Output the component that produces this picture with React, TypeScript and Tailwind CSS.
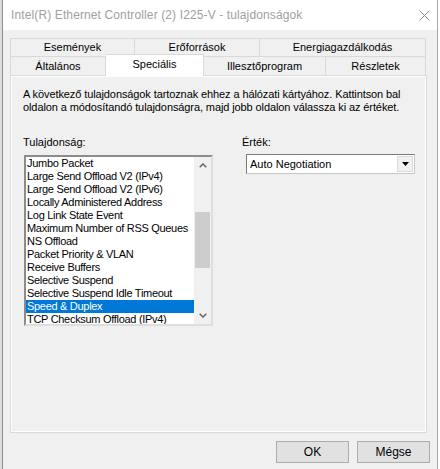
import React from "react";

const items = [
  "Jumbo Packet",
  "Large Send Offload V2 (IPv4)",
  "Large Send Offload V2 (IPv6)",
  "Locally Administered Address",
  "Log Link State Event",
  "Maximum Number of RSS Queues",
  "NS Offload",
  "Packet Priority & VLAN",
  "Receive Buffers",
  "Selective Suspend",
  "Selective Suspend Idle Timeout",
  "Speed & Duplex",
  "TCP Checksum Offload (IPv4)",
];

function Tab({ label, w, first, selected }: { label: string; w: string; first?: boolean; selected?: boolean }) {
  return (
    <div
      className={
        "flex items-center justify-center border-t border-r border-[#d9d9d9] " +
        w +
        (first ? " border-l" : "") +
        (selected ? " relative z-10 -mt-[2px] -mb-[1px] bg-white pb-[2px]" : " bg-[#f0f0f0]")
      }
    >
      {label}
    </div>
  );
}

export default function App() {
  return (
    <div className="w-[440px] h-[469px] bg-white flex overflow-hidden text-black text-[11px] leading-[13px] font-['Liberation_Sans',Arial,sans-serif]">
      <div className="w-[2px] h-full bg-[#dcdcdc]" />
      <div className="w-[436px] h-full border-x border-l-[#8f8f8f] border-r-[#a8a8a8] flex flex-col">
        {/* title bar */}
        <div className="h-[30px] bg-white flex items-center pl-[8px] pr-[7px] shrink-0">
          <span className="text-[12px] tracking-[0.12px] text-[#a0a0a0] flex-1">Intel(R) Ethernet Controller (2) I225-V - tulajdonságok</span>
          <svg width="11" height="11" viewBox="0 0 11 11">
            <path d="M0.5 0.5 L10.5 10.5 M10.5 0.5 L0.5 10.5" stroke="#8a8a8a" strokeWidth="1" fill="none" />
          </svg>
        </div>
        {/* body */}
        <div className="flex-1 bg-[#f0f0f0] pl-[7px] pt-[8px] flex flex-col">
          <div className="w-[417px] flex flex-col">
            <div className="flex h-[18px]">
              <Tab label="Események" w="w-[125px]" first />
              <Tab label="Erőforrások" w="w-[125px]" />
              <Tab label="Energiagazdálkodás" w="w-[166px]" />
            </div>
            <div className="flex h-[19px]">
              <Tab label="Általános" w="w-[96px]" first />
              <Tab label="Speciális" w="w-[98px]" selected />
              <Tab label="Illesztőprogram" w="w-[122px]" />
              <Tab label="Részletek" w="w-[100px]" />
            </div>
          </div>
          {/* panel */}
          <div className="w-[417px] h-[358px] border border-[#d9d9d9] bg-white p-[1px]">
            <div className="h-full bg-[#f0f0f0] pl-[11px] pt-[11px] flex flex-col">
              <div className="tracking-[-0.1px]">
                A következő tulajdonságok tartoznak ehhez a hálózati kártyához. Kattintson bal
                <br />
                oldalon a módosítandó tulajdonságra, majd jobb oldalon válassza ki az értéket.
              </div>
              <div className="flex mt-[22px]">
                <div className="flex flex-col w-[190px]">
                  <div>Tulajdonság:</div>
                  <div className="ml-[1px] mt-[6px] w-[189px] h-[171px] border-2 border-t-[#8c8c8c] border-l-[#8c8c8c] border-r-[#dedede] border-b-[#dedede] bg-white flex overflow-hidden">
                    <div className="flex-1 flex flex-col overflow-hidden">
                      {items.map((it) => (
                        <div
                          key={it}
                          className={
                            "h-[13px] shrink-0 pl-[1px] whitespace-nowrap tracking-[-0.3px] " +
                            (it === "Speed & Duplex" ? "bg-[#0078d7] text-white" : "")
                          }
                        >
                          {it}
                        </div>
                      ))}
                    </div>
                    <div className="w-[17px] bg-[#f0f0f0] flex flex-col shrink-0">
                      <div className="h-[17px] flex items-center justify-center">
                        <svg width="8" height="5" viewBox="0 0 8 5">
                          <path d="M0.7 4.3 L4 1 L7.3 4.3" stroke="#606060" strokeWidth="1.4" fill="none" />
                        </svg>
                      </div>
                      <div className="h-[38px]" />
                      <div className="h-[56px] mx-[1px] bg-[#cdcdcd]" />
                      <div className="flex-1" />
                      <div className="h-[17px] flex items-center justify-center">
                        <svg width="8" height="5" viewBox="0 0 8 5">
                          <path d="M0.7 0.7 L4 4 L7.3 0.7" stroke="#606060" strokeWidth="1.4" fill="none" />
                        </svg>
                      </div>
                    </div>
                  </div>
                </div>
                <div className="flex flex-col ml-[29px]">
                  <div>Érték:</div>
                  <div className="ml-[4px] mt-[5px] w-[169px] h-[20px] border border-t-[#7a7a7a] border-l-[#7a7a7a] border-r-[#c8c8c8] border-b-[#c8c8c8] bg-white flex items-center">
                    <div className="flex-1 pl-[3px]">Auto Negotiation</div>
                    <div className="w-[16px] h-[16px] mr-[1px] bg-[#f0f0f0] border border-[#dcdcdc] flex items-center justify-center">
                      <svg width="7" height="4" viewBox="0 0 7 4">
                        <path d="M0 0 L7 0 L3.5 4 Z" fill="#000" />
                      </svg>
                    </div>
                  </div>
                </div>
              </div>
            </div>
          </div>
          {/* buttons */}
          <div className="flex justify-end gap-[8px] pr-[7px] mt-[8px]">
            <button className="w-[73px] h-[22px] bg-[#e1e1e1] border border-[#adadad] text-[12px] flex items-center justify-center">OK</button>
            <button className="w-[73px] h-[22px] bg-[#e1e1e1] border border-[#adadad] text-[12px] flex items-center justify-center">Mégse</button>
          </div>
        </div>
      </div>
      <div className="w-[2px] h-full bg-white" />
    </div>
  );
}
